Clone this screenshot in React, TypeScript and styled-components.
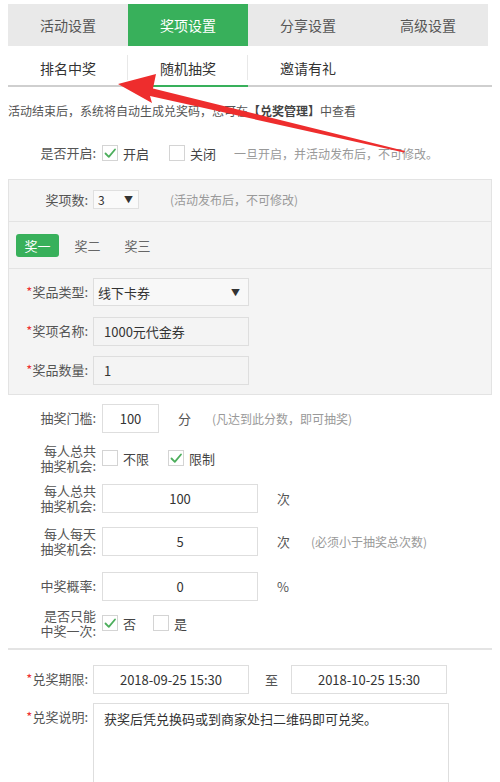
import styled, { createGlobalStyle } from 'styled-components'

const GREEN = '#38b05b'

const GlobalStyle = createGlobalStyle`
  body {
    margin: 0;
    background: #fff;
    font-family: 'Noto Sans CJK SC', 'Noto Sans', sans-serif;
    color: #333;
  }
  * {
    box-sizing: border-box;
  }
`

type CheckProps = {
  checked?: boolean
}

const Check = ({ checked }: CheckProps) => (
  <CheckBox>
    {checked && (
      <svg width="14" height="14" viewBox="0 0 14 14">
        <polyline
          points="2.5,7.5 5.8,10.8 12,3.5"
          fill="none"
          stroke="#4cae5c"
          strokeWidth="1.8"
          strokeLinecap="round"
          strokeLinejoin="round"
        />
      </svg>
    )}
  </CheckBox>
)

const Arrow = () => (
  <ArrowLayer width="500" height="782" viewBox="0 0 500 782">
    <polygon
      points="118,84 156,74 153,88.5 405,151 404,152.5 150,96 152,103"
      fill="#ee2d2d"
    />
  </ArrowLayer>
)

export default function App() {
  return (
    <Page>
      <GlobalStyle />
      <TopTabs>
        <TopTab>活动设置</TopTab>
        <TopTab $active>奖项设置</TopTab>
        <TopTab>分享设置</TopTab>
        <TopTab>高级设置</TopTab>
      </TopTabs>
      <SubTabs>
        <SubTab $sep>排名中奖</SubTab>
        <SubTab $sep $active>
          随机抽奖
        </SubTab>
        <SubTab>邀请有礼</SubTab>
      </SubTabs>

      <Info>
        活动结束后，系统将自动生成兑奖码，您可在<b>【兑奖管理】</b>中查看
      </Info>

      <Row $mt={18}>
        <Label $w={94}>是否开启:</Label>
        <Option>
          <Check checked />
          开启
        </Option>
        <Option $mr={18}>
          <Check />
          关闭
        </Option>
        <Note>一旦开启，并活动发布后，不可修改。</Note>
      </Row>

      <Panel>
        <PanelHead>
          <Label $w={84}>奖项数:</Label>
          <MiniSelect>
            <span>3</span>
            <Caret>▼</Caret>
          </MiniSelect>
          <Note $ml={31}>(活动发布后，不可修改)</Note>
        </PanelHead>
        <PrizeTabs>
          <PrizeTab $active>奖一</PrizeTab>
          <PrizeTab>奖二</PrizeTab>
          <PrizeTab>奖三</PrizeTab>
        </PrizeTabs>
        <PrizeForm>
          <Row>
            <Label $w={84}>
              <Star>*</Star>奖品类型:
            </Label>
            <Select>
              <span>线下卡券</span>
              <Caret>▼</Caret>
            </Select>
          </Row>
          <Row>
            <Label $w={84}>
              <Star>*</Star>奖项名称:
            </Label>
            <Field $w={156} $grey>
              1000元代金券
            </Field>
          </Row>
          <Row>
            <Label $w={84}>
              <Star>*</Star>奖品数量:
            </Label>
            <Field $w={156} $grey>
              1
            </Field>
          </Row>
        </PrizeForm>
      </Panel>

      <Row $mt={8}>
        <Label $w={94}>抽奖门槛:</Label>
        <Field $w={57} $center>
          100
        </Field>
        <Unit>分</Unit>
        <Note $ml={21}>(凡达到此分数，即可抽奖)</Note>
      </Row>
      <Row $mt={10}>
        <Label $w={94} $lines>
          每人总共
          <br />
          抽奖机会:
        </Label>
        <Option $mr={19}>
          <Check />
          不限
        </Option>
        <Option>
          <Check checked />
          限制
        </Option>
      </Row>
      <Row $mt={10}>
        <Label $w={94} $lines>
          每人总共
          <br />
          抽奖机会:
        </Label>
        <Field $w={156} $center>
          100
        </Field>
        <Unit>次</Unit>
      </Row>
      <Row $mt={13}>
        <Label $w={94} $lines>
          每人每天
          <br />
          抽奖机会:
        </Label>
        <Field $w={156} $center>
          5
        </Field>
        <Unit>次</Unit>
        <Note $ml={21}>(必须小于抽奖总次数)</Note>
      </Row>
      <Row $mt={15}>
        <Label $w={94}>中奖概率:</Label>
        <Field $w={156} $center>
          0
        </Field>
        <Unit>%</Unit>
      </Row>
      <Row $mt={7}>
        <Label $w={94} $lines>
          是否只能
          <br />
          中奖一次:
        </Label>
        <Option $mr={17}>
          <Check checked />否
        </Option>
        <Option>
          <Check />是
        </Option>
      </Row>

      <Divider />

      <Row $mt={14}>
        <Label $w={85}>
          <Star>*</Star>兑奖期限:
        </Label>
        <Field $w={156} $center>
          2018-09-25 15:30
        </Field>
        <To>至</To>
        <Field $w={156} $center>
          2018-10-25 15:30
        </Field>
      </Row>
      <Row $mt={9} $top>
        <Label $w={85}>
          <Star>*</Star>兑奖说明:
        </Label>
        <TextBox>获奖后凭兑换码或到商家处扫二维码即可兑奖。</TextBox>
      </Row>

      <Arrow />
    </Page>
  )
}

//style
const Page = styled.div`
  position: relative;
  width: 500px;
  height: 782px;
  overflow: hidden;
  padding: 4px 8px 0;
`

const TopTabs = styled.div`
  display: flex;
  width: 480px;
  height: 42px;
  background: #e9e9e9;
`

const TopTab = styled.div<{ $active?: boolean }>`
  width: 120px;
  display: flex;
  align-items: center;
  justify-content: center;
  font-size: 14px;
  color: ${p => (p.$active ? '#fff' : '#555')};
  background: ${p => (p.$active ? GREEN : 'transparent')};
`

const SubTabs = styled.div`
  display: flex;
  height: 41px;
  border-bottom: 2px solid #cfcfcf;
`

const SubTab = styled.div<{ $active?: boolean; $sep?: boolean }>`
  position: relative;
  width: 120px;
  display: flex;
  align-items: center;
  justify-content: center;
  padding-top: 5px;
  margin-bottom: -2px;
  font-size: 14px;
  color: #333;
  border-bottom: 2px solid ${p => (p.$active ? GREEN : 'transparent')};

  &::after {
    content: '';
    display: ${p => (p.$sep ? 'block' : 'none')};
    position: absolute;
    right: 0;
    top: 9px;
    bottom: 5px;
    width: 1px;
    background: #e8e8e8;
  }
`

const Info = styled.div`
  margin-top: 15px;
  font-size: 12px;
  line-height: 18px;
  color: #555;

  b {
    font-weight: 700;
    color: #444;
  }
`

const Row = styled.div<{ $mt?: number; $top?: boolean }>`
  display: flex;
  align-items: ${p => (p.$top ? 'flex-start' : 'center')};
  min-height: 30px;
  margin-top: ${p => p.$mt ?? 0}px;
  font-size: 13px;
`

const Label = styled.div<{ $w: number; $lines?: boolean }>`
  flex: none;
  width: ${p => p.$w}px;
  padding-right: ${p => (p.$w > 90 ? 6 : 5)}px;
  text-align: right;
  font-size: 13px;
  line-height: ${p => (p.$lines ? '15px' : '28px')};
  color: #555;
  white-space: nowrap;
`

const Star = styled.span`
  color: #e33;
`

const Option = styled.div<{ $mr?: number }>`
  display: flex;
  align-items: center;
  gap: 5px;
  margin-right: ${p => p.$mr ?? 20}px;
  color: #444;
`

const CheckBox = styled.span`
  display: flex;
  align-items: center;
  justify-content: center;
  width: 16px;
  height: 16px;
  border: 1px solid #d4d4d4;
  background: #fff;
`

const Note = styled.span<{ $ml?: number }>`
  margin-left: ${p => p.$ml ?? 0}px;
  font-size: 12px;
  color: #999;
`

const Panel = styled.div`
  margin-top: 11px;
  background: #f4f4f4;
  border: 1px solid #e3e3e3;
`

const PanelHead = styled.div`
  display: flex;
  align-items: center;
  height: 42px;
  padding-bottom: 2px;
  border-bottom: 1px solid #e3e3e3;
  font-size: 13px;
`

const MiniSelect = styled.div`
  display: flex;
  align-items: center;
  justify-content: space-between;
  width: 46px;
  height: 19px;
  padding: 0 5px 0 4px;
  background: #fafafa;
  border: 1px solid #e0e0e0;
  font-size: 12px;
  color: #333;
`

const Caret = styled.span`
  font-size: 9px;
  color: #333;
`

const PrizeTabs = styled.div`
  display: flex;
  align-items: center;
  gap: 7px;
  height: 47px;
  padding: 0 7px;
  border-bottom: 1px solid #e3e3e3;
`

const PrizeTab = styled.div<{ $active?: boolean }>`
  width: 43px;
  height: 23px;
  display: flex;
  align-items: center;
  justify-content: center;
  border-radius: 3px;
  font-size: 13px;
  color: ${p => (p.$active ? '#fff' : '#666')};
  background: ${p => (p.$active ? GREEN : 'transparent')};
`

const PrizeForm = styled.div`
  display: flex;
  flex-direction: column;
  gap: 9px;
  padding: 8px 0 9px;
`

const Select = styled.div`
  display: flex;
  align-items: center;
  justify-content: space-between;
  width: 156px;
  height: 28px;
  padding: 0 8px 0 4px;
  background: #f8f8f8;
  border: 1px solid #dedede;
  color: #333;
`

const Field = styled.div<{ $w: number; $grey?: boolean; $center?: boolean }>`
  display: flex;
  align-items: center;
  justify-content: ${p => (p.$center ? 'center' : 'flex-start')};
  width: ${p => p.$w}px;
  height: 29px;
  padding: 0 10px;
  background: ${p => (p.$grey ? '#f4f4f4' : '#fff')};
  border: 1px solid #dedede;
  font-size: 13px;
  color: #333;
`

const Unit = styled.span`
  margin-left: 19px;
  color: #555;
`

const To = styled.span`
  margin: 0 13px 0 16px;
  color: #555;
`

const Divider = styled.div`
  margin-top: 10px;
  height: 2px;
  background: #e4e4e4;
`

const TextBox = styled.div`
  width: 356px;
  height: 110px;
  padding: 6px 10px;
  border: 1px solid #dedede;
  background: #fff;
  font-size: 13px;
  line-height: 18px;
  color: #333;
`

const ArrowLayer = styled.svg`
  position: absolute;
  left: 0;
  top: 0;
  pointer-events: none;
`
